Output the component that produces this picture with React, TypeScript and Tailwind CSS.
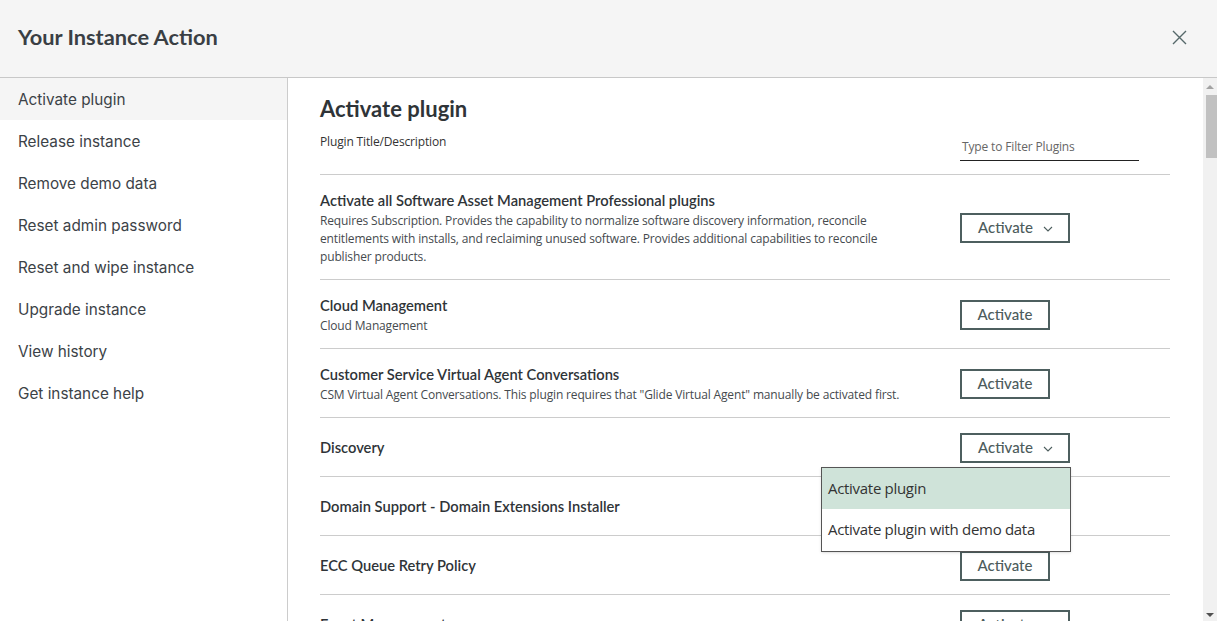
import React from 'react';

const sideItems = [
  'Activate plugin',
  'Release instance',
  'Remove demo data',
  'Reset admin password',
  'Reset and wipe instance',
  'Upgrade instance',
  'View history',
  'Get instance help',
];

type Plugin = { title: string; desc?: string; dropdown?: boolean; open?: boolean };

const plugins: Plugin[] = [
  {
    title: 'Activate all Software Asset Management Professional plugins',
    desc: 'Requires Subscription. Provides the capability to normalize software discovery information, reconcile entitlements with installs, and reclaiming unused software. Provides additional capabilities to reconcile publisher products.',
    dropdown: true,
  },
  { title: 'Cloud Management', desc: 'Cloud Management' },
  {
    title: 'Customer Service Virtual Agent Conversations',
    desc: 'CSM Virtual Agent Conversations. This plugin requires that "Glide Virtual Agent" manually be activated first.',
  },
  { title: 'Discovery', dropdown: true, open: true },
  { title: 'Domain Support - Domain Extensions Installer' },
  { title: 'ECC Queue Retry Policy' },
  { title: 'Event Management', dropdown: true },
];

const Chevron = () => (
  <svg width="10" height="6" viewBox="0 0 10 6" fill="none" className="ml-[10px] mt-[2px]">
    <path d="M1 1l4 4 4-4" stroke="#4d5e5e" strokeWidth="1.1" />
  </svg>
);

function PluginRow({ p }: { p: Plugin }) {
  return (
    <div className="flex items-center min-h-[59px] border-b border-[#cccccc] pt-[14px] pb-[13px]">
      <div className="flex-1 pr-6">
        <div className="text-[14.7px] leading-[23px] font-semibold text-[#2f3438]">{p.title}</div>
        {p.desc && (
          <div className="font-['Open_Sans',sans-serif] text-[12px] leading-[18px] tracking-[-0.15px] text-[#454a4e] max-w-[580px]">
            {p.desc}
          </div>
        )}
      </div>
      <div className="relative w-[210px] shrink-0">
        <button
          className={`flex items-center h-[30px] border-2 border-[#4d5f5f] text-[15px] text-[#4d5c5c] font-medium ${
            p.dropdown ? 'w-[110px] pl-[16px]' : 'w-[90px] justify-center'
          }`}
        >
          Activate
          {p.dropdown && <Chevron />}
        </button>
        {p.open && (
          <div className="absolute right-[99px] top-[34px] w-[250px] bg-white border border-[#555] shadow-sm z-10 font-['Open_Sans',sans-serif] text-[15px] tracking-[-0.3px] text-[#333]">
            <div className="h-[41px] flex items-center pl-[6px] bg-[#cfe3d9]">Activate plugin</div>
            <div className="h-[42px] flex items-center pl-[6px]">Activate plugin with demo data</div>
          </div>
        )}
      </div>
    </div>
  );
}

export default function App() {
  return (
    <div className="w-[1217px] h-[621px] overflow-hidden bg-white flex flex-col font-['Lato',sans-serif]">
      <div className="h-[78px] shrink-0 bg-[#f5f5f5] border-b border-[#c8c8c8] flex items-center justify-between pl-[18px] pr-[30px]">
        <h1 className="text-[21.8px] font-bold text-[#3a3f44] -mt-[2px]">Your Instance Action</h1>
        <svg width="15" height="15" viewBox="0 0 15 15" fill="none" className="-mt-[2px]">
          <path d="M1 1l13 13M14 1L1 14" stroke="#56696a" strokeWidth="1.4" />
        </svg>
      </div>
      <div className="flex flex-1 min-h-0">
        <nav className="w-[288px] shrink-0 border-r border-[#cccccc] font-['Inter',sans-serif]">
          {sideItems.map((s, i) => (
            <div
              key={s}
              className={`h-[42px] flex items-center px-[18px] pt-[3px] text-[15.3px] text-[#3c4247] ${i === 0 ? 'bg-[#f5f5f5]' : ''}`}
            >
              {s}
            </div>
          ))}
        </nav>
        <main className="flex-1 min-w-0 overflow-hidden pl-8 pr-[33px] pt-[17px]">
          <h2 className="text-[22px] leading-[28px] font-bold text-[#2f3438]">Activate plugin</h2>
          <div className="h-[52px] border-b border-[#cccccc] flex justify-between">
            <div className="pt-[10px] font-['Open_Sans',sans-serif] text-[12px] leading-[18px] tracking-[-0.15px] text-[#333]">
              Plugin Title/Description
            </div>
            <div className="w-[210px] pt-[10px]">
              <div className="w-[179px] h-[28px] border-b border-[#222] flex items-center pl-[2px] pt-[1px] font-['Open_Sans',sans-serif] text-[12px] tracking-[-0.15px] text-[#666]">
                Type to Filter Plugins
              </div>
            </div>
          </div>
          {plugins.map((p) => (
            <PluginRow key={p.title} p={p} />
          ))}
        </main>
        <div className="w-[14px] shrink-0 bg-[#f1f1f1] flex flex-col items-center">
          <svg width="8" height="5" viewBox="0 0 8 5" className="mt-[6px]">
            <path d="M0 5L4 1l4 4z" fill="#a3a3a3" />
          </svg>
          <div className="w-[11px] ml-[2px] h-[63px] bg-[#c1c1c1] mt-[6px]" />
          <div className="flex-1" />
          <svg width="8" height="5" viewBox="0 0 8 5" className="mb-[3px]">
            <path d="M0 0h8L4 4z" fill="#505050" />
          </svg>
        </div>
      </div>
    </div>
  );
}
